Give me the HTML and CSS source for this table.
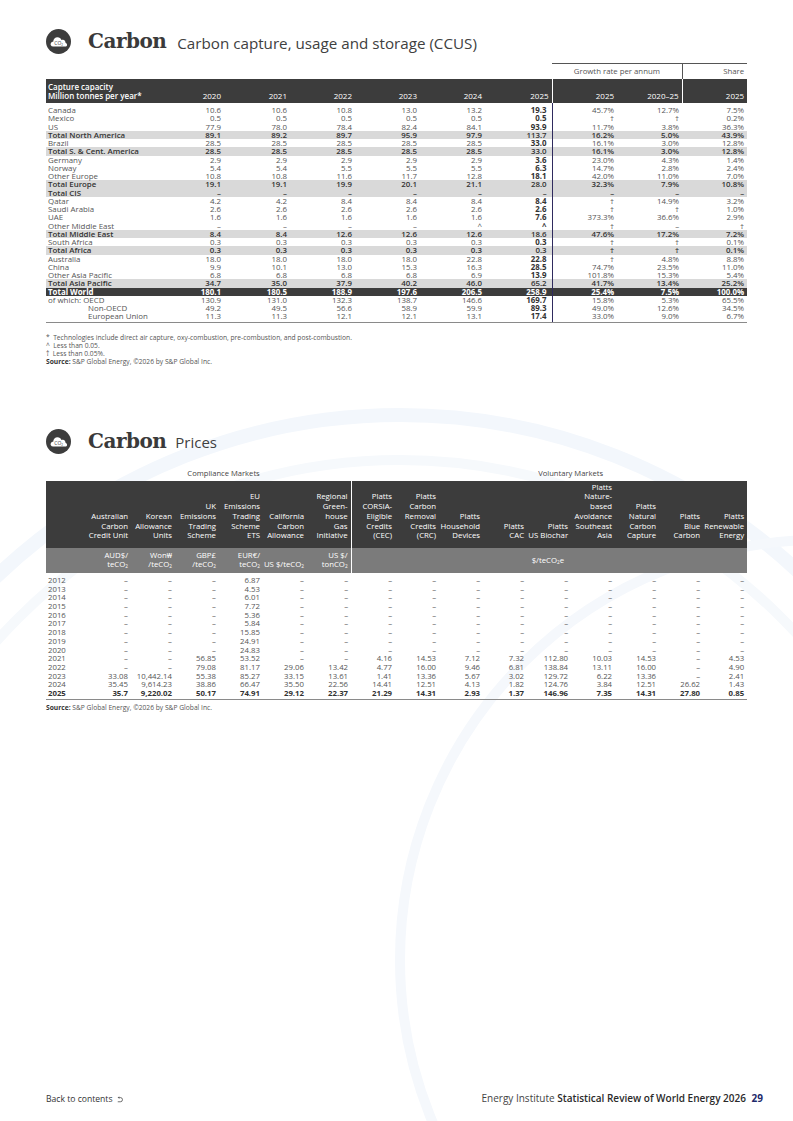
FILE: index.html
```html
<!DOCTYPE html>
<html lang="en">
<head>
<meta charset="utf-8">
<title>Carbon – Statistical Review of World Energy 2026</title>
<link rel="stylesheet" href="styles.css">
</head>
<body>
<div class="page">
  <svg class="bg" viewBox="0 0 793 1121" aria-hidden="true">
    <circle cx="400" cy="1000" r="585" fill="none" stroke="#f3f7fc" stroke-width="14"/>
    <circle cx="400" cy="1000" r="540" fill="none" stroke="#f6f9fc" stroke-width="10"/>
    <circle cx="820" cy="960" r="420" fill="none" stroke="#f5f8fc" stroke-width="10"/>
  </svg>

  <main class="content">
    <header class="heading">
      <svg class="icon" viewBox="0 0 26 26" aria-hidden="true">
        <circle cx="13" cy="13" r="13" fill="#3d3d3d"/>
        <path d="M7.4 18.2C5.1 18.2 4.2 16 5.1 14.5C5.7 13.5 6.7 13.1 7.5 13.2C7.5 10.7 9.5 8.7 12 8.7C13.9 8.7 15.4 9.8 16 11.4C16.5 11.1 17.1 11 17.6 11.1C19.3 11.3 20.4 12.7 20.3 14.3C21.4 14.7 22.1 15.7 21.9 16.8C21.7 17.6 21 18.2 20.2 18.2Z" fill="#fff"/>
        <text x="13.2" y="16.4" font-size="5.2" text-anchor="middle" fill="#3d3d3d" font-family="Open Sans, sans-serif">CO<tspan font-size="3.2" dy="1">2</tspan></text>
      </svg>
      <h1 class="h-main">Carbon</h1>
      <h2 class="h-sub">Carbon capture, usage and storage (CCUS)</h2>
    </header>

    <table class="t1">
      <colgroup>
        <col class="w-lbl"><col class="w-67"><col class="w-66"><col class="w-65"><col class="w-65"><col class="w-65"><col class="w-67"><col class="w-65"><col class="w-65"><col class="w-65">
      </colgroup>
      <tr class="grp">
        <td colspan="7"></td>
        <td colspan="2" class="g-growth">Growth rate per annum</td>
        <td class="g-share">Share</td>
      </tr>
      <tr class="hd">
        <th class="lbl">Capture capacity<br>Million tonnes per year*</th>
        <th>2020</th><th>2021</th><th>2022</th><th>2023</th><th>2024</th><th class="b pr5">2025</th>
        <th class="sepw">2025</th><th>2020–25</th><th class="sepw">2025</th>
      </tr>
      <tr class="first"><td class="lbl">Canada</td><td>10.6</td><td>10.6</td><td>10.8</td><td>13.0</td><td>13.2</td><td class="b pr5">19.3</td><td class="sep">45.7%</td><td>12.7%</td><td>7.5%</td></tr>
      <tr><td class="lbl">Mexico</td><td>0.5</td><td>0.5</td><td>0.5</td><td>0.5</td><td>0.5</td><td class="b pr5">0.5</td><td class="sep">†</td><td>†</td><td>0.2%</td></tr>
      <tr><td class="lbl">US</td><td>77.9</td><td>78.0</td><td>78.4</td><td>82.4</td><td>84.1</td><td class="b pr5">93.9</td><td class="sep">11.7%</td><td>3.8%</td><td>36.3%</td></tr>
      <tr class="tot"><td class="lbl">Total North America</td><td>89.1</td><td>89.2</td><td>89.7</td><td>95.9</td><td>97.9</td><td class="b pr5">113.7</td><td class="sep">16.2%</td><td>5.0%</td><td>43.9%</td></tr>
      <tr><td class="lbl">Brazil</td><td>28.5</td><td>28.5</td><td>28.5</td><td>28.5</td><td>28.5</td><td class="b pr5">33.0</td><td class="sep">16.1%</td><td>3.0%</td><td>12.8%</td></tr>
      <tr class="tot"><td class="lbl">Total S. &amp; Cent. America</td><td>28.5</td><td>28.5</td><td>28.5</td><td>28.5</td><td>28.5</td><td class="b pr5">33.0</td><td class="sep">16.1%</td><td>3.0%</td><td>12.8%</td></tr>
      <tr><td class="lbl">Germany</td><td>2.9</td><td>2.9</td><td>2.9</td><td>2.9</td><td>2.9</td><td class="b pr5">3.6</td><td class="sep">23.0%</td><td>4.3%</td><td>1.4%</td></tr>
      <tr><td class="lbl">Norway</td><td>5.4</td><td>5.4</td><td>5.5</td><td>5.5</td><td>5.5</td><td class="b pr5">6.3</td><td class="sep">14.7%</td><td>2.8%</td><td>2.4%</td></tr>
      <tr><td class="lbl">Other Europe</td><td>10.8</td><td>10.8</td><td>11.6</td><td>11.7</td><td>12.8</td><td class="b pr5">18.1</td><td class="sep">42.0%</td><td>11.0%</td><td>7.0%</td></tr>
      <tr class="tot"><td class="lbl">Total Europe</td><td>19.1</td><td>19.1</td><td>19.9</td><td>20.1</td><td>21.1</td><td class="b pr5">28.0</td><td class="sep">32.3%</td><td>7.9%</td><td>10.8%</td></tr>
      <tr class="tot"><td class="lbl">Total CIS</td><td>–</td><td>–</td><td>–</td><td>–</td><td>–</td><td class="b pr5">–</td><td class="sep">–</td><td>–</td><td>–</td></tr>
      <tr><td class="lbl">Qatar</td><td>4.2</td><td>4.2</td><td>8.4</td><td>8.4</td><td>8.4</td><td class="b pr5">8.4</td><td class="sep">†</td><td>14.9%</td><td>3.2%</td></tr>
      <tr><td class="lbl">Saudi Arabia</td><td>2.6</td><td>2.6</td><td>2.6</td><td>2.6</td><td>2.6</td><td class="b pr5">2.6</td><td class="sep">†</td><td>†</td><td>1.0%</td></tr>
      <tr><td class="lbl">UAE</td><td>1.6</td><td>1.6</td><td>1.6</td><td>1.6</td><td>1.6</td><td class="b pr5">7.6</td><td class="sep">373.3%</td><td>36.6%</td><td>2.9%</td></tr>
      <tr><td class="lbl">Other Middle East</td><td>–</td><td>–</td><td>–</td><td>–</td><td>^</td><td class="b pr5">^</td><td class="sep">†</td><td>–</td><td>†</td></tr>
      <tr class="tot"><td class="lbl">Total Middle East</td><td>8.4</td><td>8.4</td><td>12.6</td><td>12.6</td><td>12.6</td><td class="b pr5">18.6</td><td class="sep">47.6%</td><td>17.2%</td><td>7.2%</td></tr>
      <tr><td class="lbl">South Africa</td><td>0.3</td><td>0.3</td><td>0.3</td><td>0.3</td><td>0.3</td><td class="b pr5">0.3</td><td class="sep">†</td><td>†</td><td>0.1%</td></tr>
      <tr class="tot"><td class="lbl">Total Africa</td><td>0.3</td><td>0.3</td><td>0.3</td><td>0.3</td><td>0.3</td><td class="b pr5">0.3</td><td class="sep">†</td><td>†</td><td>0.1%</td></tr>
      <tr><td class="lbl">Australia</td><td>18.0</td><td>18.0</td><td>18.0</td><td>18.0</td><td>22.8</td><td class="b pr5">22.8</td><td class="sep">†</td><td>4.8%</td><td>8.8%</td></tr>
      <tr><td class="lbl">China</td><td>9.9</td><td>10.1</td><td>13.0</td><td>15.3</td><td>16.3</td><td class="b pr5">28.5</td><td class="sep">74.7%</td><td>23.5%</td><td>11.0%</td></tr>
      <tr><td class="lbl">Other Asia Pacific</td><td>6.8</td><td>6.8</td><td>6.8</td><td>6.8</td><td>6.9</td><td class="b pr5">13.9</td><td class="sep">101.8%</td><td>15.3%</td><td>5.4%</td></tr>
      <tr class="tot"><td class="lbl">Total Asia Pacific</td><td>34.7</td><td>35.0</td><td>37.9</td><td>40.2</td><td>46.0</td><td class="b pr5">65.2</td><td class="sep">41.7%</td><td>13.4%</td><td>25.2%</td></tr>
      <tr class="world"><td class="lbl">Total World</td><td>180.1</td><td>180.5</td><td>188.9</td><td>197.6</td><td>206.5</td><td class="b pr5">258.9</td><td class="sep">25.4%</td><td>7.5%</td><td>100.0%</td></tr>
      <tr><td class="lbl">of which: OECD</td><td>130.9</td><td>131.0</td><td>132.3</td><td>138.7</td><td>146.6</td><td class="b pr5">169.7</td><td class="sep">15.8%</td><td>5.3%</td><td>65.5%</td></tr>
      <tr><td class="lbl ind">Non-OECD</td><td>49.2</td><td>49.5</td><td>56.6</td><td>58.9</td><td>59.9</td><td class="b pr5">89.3</td><td class="sep">49.0%</td><td>12.6%</td><td>34.5%</td></tr>
      <tr class="last"><td class="lbl ind">European Union</td><td>11.3</td><td>11.3</td><td>12.1</td><td>12.1</td><td>13.1</td><td class="b pr5">17.4</td><td class="sep">33.0%</td><td>9.0%</td><td>6.7%</td></tr>
    </table>

    <div class="notes">
      <p>*&nbsp; Technologies include direct air capture, oxy-combustion, pre-combustion, and post-combustion.</p>
      <p>^&nbsp; Less than 0.05.</p>
      <p>†&nbsp; Less than 0.05%.</p>
      <p><strong>Source:</strong> S&amp;P Global Energy, ©2026 by S&amp;P Global Inc.</p>
    </div>

    <header class="heading heading2">
      <svg class="icon" viewBox="0 0 26 26" aria-hidden="true">
        <circle cx="13" cy="13" r="13" fill="#3d3d3d"/>
        <path d="M7.4 18.2C5.1 18.2 4.2 16 5.1 14.5C5.7 13.5 6.7 13.1 7.5 13.2C7.5 10.7 9.5 8.7 12 8.7C13.9 8.7 15.4 9.8 16 11.4C16.5 11.1 17.1 11 17.6 11.1C19.3 11.3 20.4 12.7 20.3 14.3C21.4 14.7 22.1 15.7 21.9 16.8C21.7 17.6 21 18.2 20.2 18.2Z" fill="#fff"/>
        <text x="13.2" y="16.4" font-size="5.2" text-anchor="middle" fill="#3d3d3d" font-family="Open Sans, sans-serif">CO<tspan font-size="3.2" dy="1">2</tspan></text>
      </svg>
      <h1 class="h-main">Carbon</h1>
      <h2 class="h-sub">Prices</h2>
    </header>

    <table class="t2">
      <colgroup>
        <col class="w-yr"><col class="w-44"><col class="w-44"><col class="w-44"><col class="w-44"><col class="w-44"><col class="w-44"><col class="w-44"><col class="w-44"><col class="w-44"><col class="w-44"><col class="w-44"><col class="w-44"><col class="w-44"><col class="w-44"><col class="w-44">
      </colgroup>
      <tr class="mk">
        <td></td>
        <td colspan="6" class="mk-c">Compliance Markets</td>
        <td colspan="9" class="mk-v">Voluntary Markets</td>
      </tr>
      <tr class="hd2">
        <th></th>
        <th>Australian<br>Carbon<br>Credit Unit</th>
        <th>Korean<br>Allowance<br>Units</th>
        <th>UK<br>Emissions<br>Trading<br>Scheme</th>
        <th>EU<br>Emissions<br>Trading<br>Scheme<br>ETS</th>
        <th>California<br>Carbon<br>Allowance</th>
        <th>Regional<br>Green-<br>house<br>Gas<br>Initiative</th>
        <th class="vsep">Platts<br>CORSIA-<br>Eligible<br>Credits<br>(CEC)</th>
        <th>Platts<br>Carbon<br>Removal<br>Credits<br>(CRC)</th>
        <th>Platts<br>Household<br>Devices</th>
        <th>Platts<br>CAC</th>
        <th>Platts<br>US Biochar</th>
        <th>Platts<br>Nature-<br>based<br>Avoidance<br>Southeast<br>Asia</th>
        <th>Platts<br>Natural<br>Carbon<br>Capture</th>
        <th>Platts<br>Blue<br>Carbon</th>
        <th>Platts<br>Renewable<br>Energy</th>
      </tr>
      <tr class="un">
        <td></td>
        <td>AUD$/<br>teCO<sub>2</sub></td>
        <td>Won₩<br>/teCO<sub>2</sub></td>
        <td>GBP£<br>/teCO<sub>2</sub></td>
        <td>EUR€/<br>teCO<sub>2</sub></td>
        <td class="nw">US $/teCO<sub>2</sub></td>
        <td>US $/<br>tonCO<sub>2</sub></td>
        <td colspan="9" class="vsep mid">$/teCO<sub>2</sub>e</td>
      </tr>
      <tr class="first"><td class="yr">2012</td><td>–</td><td>–</td><td>–</td><td>6.87</td><td>–</td><td>–</td><td>–</td><td>–</td><td>–</td><td>–</td><td>–</td><td>–</td><td>–</td><td>–</td><td>–</td></tr>
      <tr><td class="yr">2013</td><td>–</td><td>–</td><td>–</td><td>4.53</td><td>–</td><td>–</td><td>–</td><td>–</td><td>–</td><td>–</td><td>–</td><td>–</td><td>–</td><td>–</td><td>–</td></tr>
      <tr><td class="yr">2014</td><td>–</td><td>–</td><td>–</td><td>6.01</td><td>–</td><td>–</td><td>–</td><td>–</td><td>–</td><td>–</td><td>–</td><td>–</td><td>–</td><td>–</td><td>–</td></tr>
      <tr><td class="yr">2015</td><td>–</td><td>–</td><td>–</td><td>7.72</td><td>–</td><td>–</td><td>–</td><td>–</td><td>–</td><td>–</td><td>–</td><td>–</td><td>–</td><td>–</td><td>–</td></tr>
      <tr><td class="yr">2016</td><td>–</td><td>–</td><td>–</td><td>5.36</td><td>–</td><td>–</td><td>–</td><td>–</td><td>–</td><td>–</td><td>–</td><td>–</td><td>–</td><td>–</td><td>–</td></tr>
      <tr><td class="yr">2017</td><td>–</td><td>–</td><td>–</td><td>5.84</td><td>–</td><td>–</td><td>–</td><td>–</td><td>–</td><td>–</td><td>–</td><td>–</td><td>–</td><td>–</td><td>–</td></tr>
      <tr><td class="yr">2018</td><td>–</td><td>–</td><td>–</td><td>15.85</td><td>–</td><td>–</td><td>–</td><td>–</td><td>–</td><td>–</td><td>–</td><td>–</td><td>–</td><td>–</td><td>–</td></tr>
      <tr><td class="yr">2019</td><td>–</td><td>–</td><td>–</td><td>24.91</td><td>–</td><td>–</td><td>–</td><td>–</td><td>–</td><td>–</td><td>–</td><td>–</td><td>–</td><td>–</td><td>–</td></tr>
      <tr><td class="yr">2020</td><td>–</td><td>–</td><td>–</td><td>24.83</td><td>–</td><td>–</td><td>–</td><td>–</td><td>–</td><td>–</td><td>–</td><td>–</td><td>–</td><td>–</td><td>–</td></tr>
      <tr><td class="yr">2021</td><td>–</td><td>–</td><td>56.85</td><td>53.52</td><td>–</td><td>–</td><td>4.16</td><td>14.53</td><td>7.12</td><td>7.32</td><td>112.80</td><td>10.03</td><td>14.53</td><td>–</td><td>4.53</td></tr>
      <tr><td class="yr">2022</td><td>–</td><td>–</td><td>79.08</td><td>81.17</td><td>29.06</td><td>13.42</td><td>4.77</td><td>16.00</td><td>9.46</td><td>6.81</td><td>138.84</td><td>13.11</td><td>16.00</td><td>–</td><td>4.90</td></tr>
      <tr><td class="yr">2023</td><td>33.08</td><td>10,442.14</td><td>55.38</td><td>85.27</td><td>33.15</td><td>13.61</td><td>1.41</td><td>13.36</td><td>5.67</td><td>3.02</td><td>129.72</td><td>6.22</td><td>13.36</td><td>–</td><td>2.41</td></tr>
      <tr><td class="yr">2024</td><td>35.45</td><td>9,614.23</td><td>38.86</td><td>66.47</td><td>35.50</td><td>22.56</td><td>14.41</td><td>12.51</td><td>4.13</td><td>1.82</td><td>124.76</td><td>3.84</td><td>12.51</td><td>26.62</td><td>1.43</td></tr>
      <tr class="last"><td class="yr">2025</td><td>35.7</td><td>9,220.02</td><td>50.17</td><td>74.91</td><td>29.12</td><td>22.37</td><td>21.29</td><td>14.31</td><td>2.93</td><td>1.37</td><td>146.96</td><td>7.35</td><td>14.31</td><td>27.80</td><td>0.85</td></tr>
    </table>

    <div class="notes notes2">
      <p><strong>Source:</strong> S&amp;P Global Energy, ©2026 by S&amp;P Global Inc.</p>
    </div>
  </main>

  <footer class="footer">
    <span class="back">Back to contents
      <svg class="back-ico" viewBox="0 0 8 8" aria-hidden="true"><path d="M2.6 1.8H5A2.4 2.4 0 0 1 5 6.6H2M3.7 0.7L2.6 1.8L3.7 2.9" fill="none" stroke="#333" stroke-width="0.8"/></svg>
    </span>
    <span class="ref"><span class="org">Energy Institute</span> <span class="title">Statistical Review of World Energy 2026</span> <span class="pg">29</span></span>
  </footer>
</div>
</body>
</html>
```

FILE: styles.css
```css
html, body {
  margin: 0;
  padding: 0;
  background: #fff;
}

body {
  font-family: "Open Sans", "Noto Sans", sans-serif;
  color: #555;
}

.page {
  position: relative;
  width: 793px;
  height: 1121px;
  overflow: hidden;
  display: flex;
  flex-direction: column;
}

.bg {
  position: absolute;
  left: 0;
  top: 0;
  width: 793px;
  height: 1121px;
  z-index: 0;
}

.content {
  position: relative;
  z-index: 1;
  width: 701px;
  padding: 29px 0 0 46px;
}

/* Headings */
.heading {
  display: flex;
  align-items: center;
  height: 25px;
}

.icon {
  width: 25px;
  height: 25px;
  flex: none;
}

.h-main {
  margin: 0 0 0 17px;
  font-family: "DejaVu Serif", serif;
  font-weight: bold;
  font-size: 20px;
  letter-spacing: -0.5px;
  color: #3a3a3a;
  line-height: 25px;
}

.h-sub {
  margin: 3px 0 0 11px;
  font-weight: normal;
  font-size: 15.2px;
  color: #404040;
  line-height: 25px;
}

.heading2 {
  margin-top: 62px;
}

.heading2 .h-sub {
  font-size: 15px;
  margin-left: 9px;
}

/* Tables */
table {
  border-collapse: collapse;
  table-layout: fixed;
  width: 701px;
}

.w-lbl { width: 111px; }
.w-67 { width: 67px; }
.w-66 { width: 66px; }
.w-65 { width: 65px; }
.w-yr { width: 41px; }
.w-44 { width: 44px; }

/* Table 1 */
.t1 {
  margin-top: 9px;
}

.t1 td,
.t1 th {
  padding: 0 3px;
  text-align: right;
  white-space: nowrap;
  font-size: 7.9px;
}

.t1 td {
  height: 8.25px;
  line-height: 8.25px;
  color: #555;
}

.t1 .grp td {
  height: 15px;
  line-height: 15px;
  font-size: 7.8px;
  color: #555;
}

.t1 .g-growth {
  border-top: 1px solid #555;
  text-align: center;
}

.t1 .g-share {
  border-top: 1px solid #555;
  border-left: 1px solid #555;
}

.t1 .hd th {
  background: #3c3c3c;
  color: #fff;
  font-weight: normal;
  font-size: 8px;
  line-height: 9px;
  vertical-align: bottom;
  padding: 3px 3px 3px;
}

.t1 .hd th.lbl {
  text-align: left;
  font-weight: 600;
  padding-left: 2px;
}

.t1 .hd th.sepw {
  border-left: 1.5px solid #fff;
}

.t1 td.lbl {
  text-align: left;
  padding-left: 2px;
}

.t1 td.ind {
  padding-left: 42px;
}

.t1 .b {
  font-weight: 700;
  color: #333;
}

.t1 .hd th.b {
  color: #fff;
}

.t1 .pr5 {
  padding-right: 5px;
}

.t1 td.sep {
  border-left: 1.5px solid #2f2b5e;
}

.t1 tr.first td {
  padding-top: 3px;
}

.t1 tr.tot td {
  background: #d9d9d9;
  color: #333;
  font-weight: 600;
}

.t1 tr.world td {
  background: #3c3c3c;
  color: #fff;
  font-weight: 700;
}

.t1 tr.last td {
  border-bottom: 1.5px solid #8a8a8a;
  padding-bottom: 1px;
}

/* Notes */
.notes {
  margin-top: 11px;
  font-size: 6.7px;
  line-height: 8.3px;
  color: #555;
}

.notes p {
  margin: 0;
}

.notes strong {
  color: #333;
  font-weight: 700;
}

.notes2 {
  margin-top: 4px;
}

/* Table 2 */
.t2 {
  margin-top: 13px;
}

.t2 td,
.t2 th {
  padding: 0 3px 0 0;
  text-align: right;
  white-space: nowrap;
  font-size: 7.8px;
}

.t2 .mk td {
  text-align: center;
  color: #444;
  height: 14px;
  line-height: 12px;
  vertical-align: top;
  font-size: 7.6px;
}

.t2 .mk .mk-c {
  padding-left: 12px;
}

.t2 .mk .mk-v {
  padding-left: 46px;
}

.t2 .hd2 th {
  background: #3c3c3c;
  color: #fff;
  font-weight: normal;
  line-height: 9.7px;
  vertical-align: bottom;
  padding: 2px 3px 7px 0;
}

.t2 .vsep {
  border-left: 1.5px solid #fff;
}

.t2 .un td {
  background: #7b7b7b;
  color: #fff;
  line-height: 9.5px;
  vertical-align: bottom;
  padding: 3px 3px 3px 0;
}

.t2 .un td.mid {
  text-align: center;
  vertical-align: middle;
}

.t2 sub {
  font-size: 60%;
  line-height: 0;
  vertical-align: -0.3em;
}

.t2 td {
  height: 8.7px;
  line-height: 8.7px;
  color: #555;
}

.t2 td.yr {
  text-align: left;
  padding-left: 2px;
}

.t2 tr.first td {
  padding-top: 3px;
}

.t2 tr.last td {
  font-weight: 700;
  color: #333;
  border-bottom: 1.5px solid #8a8a8a;
  padding-bottom: 1px;
}

/* Footer */
.footer {
  position: relative;
  z-index: 1;
  margin-top: auto;
  display: flex;
  justify-content: space-between;
  align-items: baseline;
  padding: 0 30px 16px 46px;
  font-size: 8.6px;
  line-height: 12px;
  color: #333;
}

.back {
  display: inline-flex;
  align-items: center;
  gap: 3px;
}

.back-ico {
  width: 7px;
  height: 7px;
}

.ref {
  font-size: 10px;
}

.ref .org {
  color: #444;
}

.ref .title {
  color: #2a2a2a;
  font-weight: 600;
}

.ref .pg {
  color: #1d2a6b;
  font-weight: 700;
  margin-left: 3px;
}
```
